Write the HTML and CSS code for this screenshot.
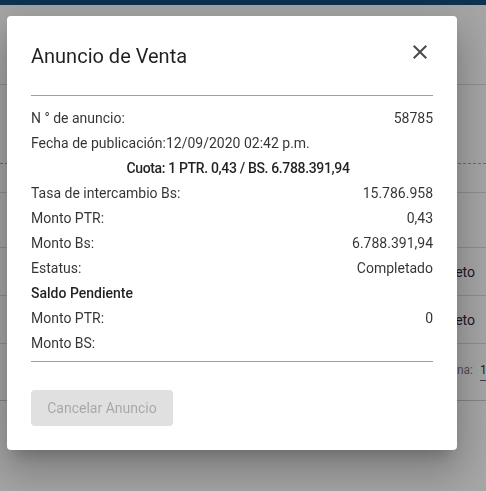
FILE: index.html
```html
<!DOCTYPE html>
<html lang="es">
<head>
<meta charset="utf-8">
<title>Anuncio de Venta</title>
<link rel="stylesheet" href="styles.css">
</head>
<body>
<div class="page">
  <div class="toolbar"></div>
  <div class="table">
    <div class="trow h-head"></div>
    <div class="trow h-a dotted"></div>
    <div class="trow h-b"></div>
    <div class="trow h-c"></div>
    <div class="trow h-d"><span class="cell"><span class="cell-text">Completo</span></span></div>
    <div class="trow h-d"><span class="cell"><span class="cell-text">Completo</span></span></div>
    <div class="trow h-pag"><span class="pag">Items por página: <span class="pag-num">10</span></span></div>
  </div>
</div>
<div class="overlay"></div>
<div class="dialog">
  <div class="dialog-head">
    <h2 class="dialog-title">Anuncio de Venta</h2>
    <button class="close" aria-label="Cerrar">
      <svg viewBox="0 0 24 24" width="24" height="24"><path d="M19 6.41L17.59 5 12 10.59 6.41 5 5 6.41 10.59 12 5 17.59 6.41 19 12 13.41 17.59 19 19 17.59 13.41 12z"/></svg>
    </button>
  </div>
  <hr class="divider top">
  <div class="rows">
    <div class="row"><span>N ° de anuncio:</span><span>58785</span></div>
    <div class="row"><span>Fecha de publicación:12/09/2020 02:42 p.m.</span></div>
    <div class="row center"><strong class="quota">Cuota: 1 PTR. 0,43 / BS. 6.788.391,94</strong></div>
    <div class="row"><span>Tasa de intercambio Bs:</span><span>15.786.958</span></div>
    <div class="row"><span>Monto PTR:</span><span>0,43</span></div>
    <div class="row"><span>Monto Bs:</span><span>6.788.391,94</span></div>
    <div class="row"><span>Estatus:</span><span>Completado</span></div>
    <div class="row"><strong>Saldo Pendiente</strong></div>
    <div class="row"><span>Monto PTR:</span><span>0</span></div>
    <div class="row"><span>Monto BS:</span><span></span></div>
  </div>
  <hr class="divider bottom">
  <div class="actions">
    <button class="btn" disabled>Cancelar Anuncio</button>
  </div>
</div>
</body>
</html>
```

FILE: styles.css
```css
html, body {
  margin: 0;
  padding: 0;
  height: 100%;
}
body {
  background: #f5f5f5;
  font-family: Roboto, "Liberation Sans", Arial, sans-serif;
  overflow: hidden;
}
.page {
  height: 100%;
}
.toolbar {
  height: 5px;
  background: #154a7a;
}
.table {
  display: flex;
  flex-direction: column;
}
.trow {
  border-bottom: 1px solid rgba(0,0,0,0.14);
  display: flex;
  align-items: center;
  justify-content: flex-end;
  box-sizing: border-box;
}
.h-head { height: 80px; }
.h-a { height: 79px; }
.dotted { border-bottom: 1px dashed rgba(0,0,0,0.35); }
.h-b { height: 29px; }
.h-c { height: 55px; }
.h-d { height: 48px; }
.h-pag { height: 57px; border-bottom-color: rgba(0,0,0,0.2); }
.cell {
  display: flex;
  justify-content: flex-end;
  width: 18px;
  overflow: hidden;
  margin-right: 11px;
}
.cell-text {
  font-size: 14px;
  color: rgba(0,0,0,0.87);
  white-space: nowrap;
  flex: none;
}
.pag {
  font-size: 12px;
  color: rgba(0,0,0,0.54);
  margin-right: -14px;
  white-space: nowrap;
}
.pag-num {
  display: inline-block;
  margin-left: 4px;
  color: rgba(0,0,0,0.87);
  border-bottom: 1px solid rgba(0,0,0,0.6);
  padding-bottom: 3px;
  width: 20px;
}
.overlay {
  position: fixed;
  inset: 0;
  background: rgba(0,0,0,0.32);
}
.dialog {
  position: absolute;
  left: 7px;
  top: 16px;
  width: 450px;
  box-sizing: border-box;
  padding: 24px;
  background: #fff;
  border-radius: 4px;
  box-shadow: 0 11px 15px -7px rgba(0,0,0,0.2), 0 24px 38px 3px rgba(0,0,0,0.14), 0 9px 46px 8px rgba(0,0,0,0.12);
  color: rgba(0,0,0,0.87);
}
.dialog-head {
  display: flex;
  justify-content: space-between;
  align-items: center;
  height: 32px;
}
.dialog-title {
  margin: 0;
  font-size: 20px;
  font-weight: 400;
  line-height: 32px;
  color: rgba(0,0,0,0.87);
}
.close {
  width: 24px;
  height: 24px;
  margin-right: 1px;
  margin-top: -8px;
  padding: 0;
  border: 0;
  background: transparent;
  fill: #4a4a4a;
}
.close svg { display: block; }
.divider {
  border: 0;
  height: 1px;
  background: #9e9e9e;
  margin: 0;
}
.divider.top { margin-top: 23px; }
.divider.bottom { margin-top: 5px; }
.rows {
  margin-top: 10px;
  font-size: 14px;
}
.row {
  display: flex;
  justify-content: space-between;
  height: 25px;
  line-height: 25px;
  color: rgba(0,0,0,0.8);
}
.row strong {
  font-weight: 500;
  color: rgba(0,0,0,0.87);
}
.row strong.quota {
  letter-spacing: -0.35px;
}
.row.center {
  justify-content: center;
  padding-left: 12px;
}
.actions {
  margin-top: 28px;
  display: flex;
}
.btn {
  height: 36px;
  width: 142px;
  border: 0;
  border-radius: 4px;
  background: #e0e0e0;
  color: rgba(0,0,0,0.26);
  font-family: Roboto, "Liberation Sans", Arial, sans-serif;
  font-size: 14px;
  font-weight: 400;
  padding: 0;
  white-space: nowrap;
}
```
